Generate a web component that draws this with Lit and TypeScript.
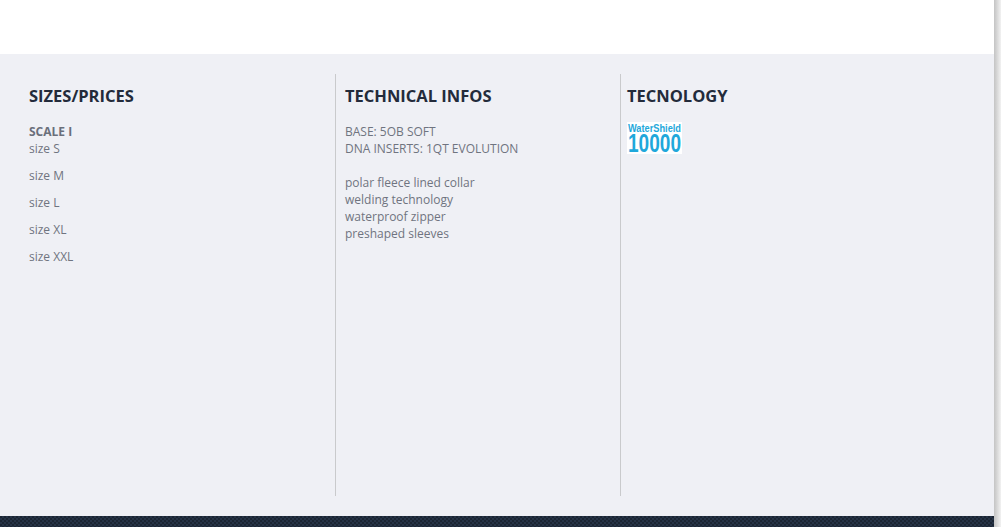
import { LitElement, html, css } from "lit";
import { customElement } from "lit/decorators.js";

@customElement("app-root")
export class AppRoot extends LitElement {
  static styles = css`
    :host { display: flex; width: 1001px; height: 527px; overflow: hidden; font-family: "Open Sans", sans-serif; background: #fff; }
    .page { width: 994px; display: flex; flex-direction: column; flex: none; }
    .top { height: 54px; background: #fff; flex: none; }
    .panel { height: 462px; flex: none; background: #eff0f5; padding: 20px 0; box-sizing: border-box; display: flex; }
    .col { box-sizing: border-box; height: 422px; padding-top: 10px; }
    .c1 { width: 335px; padding-left: 29px; }
    .c2 { width: 285px; padding-left: 9px; border-left: 1px solid #c9cacc; }
    .c3 { flex: 1; padding-left: 6px; border-left: 1px solid #c9cacc; }
    h3 { margin: 0; font-size: 16.5px; line-height: 23px; font-weight: 700; color: #232b3b; }
    .body { margin-top: 16px; font-size: 12px; line-height: 17px; color: #6f7480; }
    .scale { font-weight: 700; color: #6a6f7b; line-height: 17px; }
    .size { line-height: 17px; margin-bottom: 10px; }
    .gap { height: 17px; }
    .logo { display: block; margin-top: 15px; background: #fff; }
    .logo text { font-family: "Liberation Sans", sans-serif; font-weight: 700; fill: #1fa8db; }
    .foot { height: 11px; flex: none; background-color: #1f2a3a;
      background-image: repeating-conic-gradient(#263346 0 25%, #1b2533 0 50%); background-size: 4px 4px; }
    .edge { flex: 1; background: linear-gradient(90deg, #c4c4c4, #d3d3d3 35%, #f2f2f2); }
  `;

  render() {
    const sizes = ["size S", "size M", "size L", "size XL", "size XXL"];
    return html`
      <div class="page">
        <div class="top"></div>
        <div class="panel">
          <div class="col c1">
            <h3>SIZES/PRICES</h3>
            <div class="body">
              <div class="scale">SCALE I</div>
              ${sizes.map((s) => html`<div class="size">${s}</div>`)}
            </div>
          </div>
          <div class="col c2">
            <h3>TECHNICAL INFOS</h3>
            <div class="body">
              <div>BASE: 5OB SOFT</div>
              <div>DNA INSERTS: 1QT EVOLUTION</div>
              <div class="gap"></div>
              <div>polar fleece lined collar</div>
              <div>welding technology</div>
              <div>waterproof zipper</div>
              <div>preshaped sleeves</div>
            </div>
          </div>
          <div class="col c3">
            <h3>TECNOLOGY</h3>
            <svg class="logo" width="55" height="32" viewBox="0 0 55 32">
              <text x="1" y="9.5" font-size="10" textLength="53" lengthAdjust="spacingAndGlyphs">WaterShield</text>
              <text x="1" y="30" font-size="25" textLength="53" lengthAdjust="spacingAndGlyphs">10000</text>
            </svg>
          </div>
        </div>
        <div class="foot"></div>
      </div>
      <div class="edge"></div>
    `;
  }
}
